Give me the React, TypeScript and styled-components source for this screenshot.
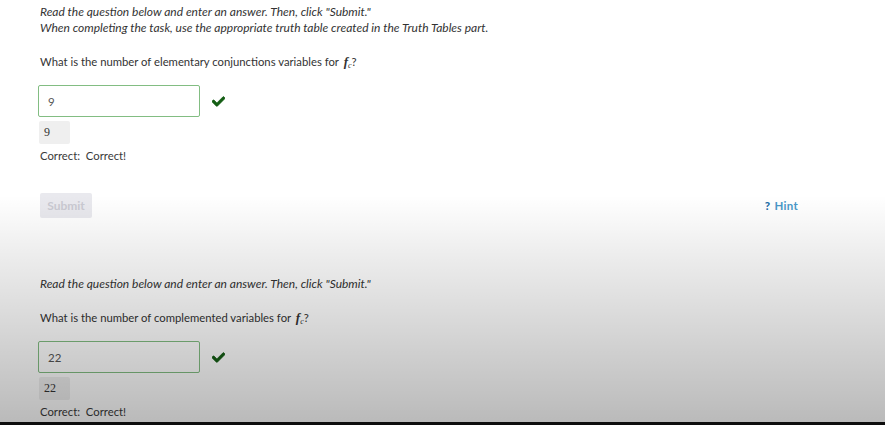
import React from 'react';
import styled, { createGlobalStyle } from 'styled-components';
import { FaCheck } from 'react-icons/fa';

const GlobalStyle = createGlobalStyle`
    body {
        margin: 0;
        background: #ffffff;
        font-family: 'Lato', 'Open Sans', sans-serif;
    }
`

const Page = styled.div`
    position: relative;
    width: 885px;
    height: 425px;
    box-sizing: border-box;
    padding: 4px 0 0 40px;
    overflow: hidden;
    background: #ffffff;
    border-bottom: 3px solid #0d0d0d;
    &::after {
        content: '';
        position: absolute;
        left: 0;
        right: 0;
        top: 195px;
        bottom: 0;
        pointer-events: none;
        background: linear-gradient(to bottom, rgba(0, 0, 0, 0) 0%, rgba(0, 0, 0, 0.27) 100%);
    }
`
const Block = styled.section<{ $gap?: number }>`
    display: flex;
    flex-direction: column;
    align-items: flex-start;
    margin-top: ${p => p.$gap ?? 0}px;
`
const Instruction = styled.p`
    margin: 0;
    font-size: 12px;
    line-height: 16px;
    font-style: italic;
    color: #333333;
`
const Question = styled.p`
    margin: 18px 0 0;
    height: 16px;
    font-size: 11.3px;
    line-height: 16px;
    color: #333333;
`
const MathVar = styled.span`
    font-family: 'Liberation Serif', serif;
    font-style: italic;
    font-weight: 700;
    font-size: 13px;
    line-height: 0;
    margin-left: 2px;
    sub {
        font-size: 8px;
        font-weight: 400;
        line-height: 0;
        vertical-align: -2px;
    }
`
const AnswerRow = styled.div`
    display: flex;
    align-items: center;
    margin-top: 15px;
`
const AnswerInput = styled.input`
    width: 162px;
    height: 32px;
    box-sizing: border-box;
    margin: 0 0 0 -2px;
    padding: 0 9px;
    font-family: 'Lato', 'Open Sans', sans-serif;
    font-size: 11.5px;
    color: #555555;
    background: transparent;
    border: 1.5px solid #82bd82;
    border-radius: 2px;
    outline: none;
`
const Check = styled(FaCheck)`
    margin-left: 12px;
    width: 13px;
    height: 13px;
    color: #155e15;
    stroke: #155e15;
    stroke-width: 30px;
`
const Preview = styled.div`
    margin-top: 4px;
    min-width: 31px;
    height: 23px;
    box-sizing: border-box;
    padding: 0 5px;
    margin-left: -1px;
    display: flex;
    align-items: center;
    background: #efefef;
    border-radius: 2px;
    font-family: 'Liberation Serif', serif;
    font-size: 12px;
    color: #333333;
`
const Feedback = styled.p`
    margin: 4px 0 0;
    font-size: 11.3px;
    line-height: 16px;
    color: #3a3a3a;
`
const ActionBar = styled.div`
    display: flex;
    justify-content: space-between;
    align-items: center;
    width: 758px;
    margin-top: 29px;
`
const SubmitButton = styled.button`
    width: 52px;
    height: 25px;
    padding: 0;
    font-family: 'Lato', 'Open Sans', sans-serif;
    font-size: 12px;
    font-weight: 700;
    color: #cacad2;
    background: #e9e9ee;
    border: none;
    border-radius: 2px;
`
const HintLink = styled.a`
    display: flex;
    align-items: center;
    gap: 4px;
    font-size: 11.5px;
    font-weight: 700;
    letter-spacing: 0.3px;
    color: #4a98c8;
    text-decoration: none;
    span {
        color: #1f6fa8;
        font-weight: 900;
    }
`

type QuestionProps = {
    lines: string[];
    text: string;
    answer: string;
    gap?: number;
};

const QuestionBlock = ({ lines, text, answer, gap }: QuestionProps) => (
    <Block $gap={gap}>
        {lines.map((l, i) => <Instruction key={i}>{l}</Instruction>)}
        <Question>
            {text} <MathVar>f<sub>c</sub></MathVar>?
        </Question>
        <AnswerRow>
            <AnswerInput type="text" defaultValue={answer} />
            <Check />
        </AnswerRow>
        <Preview>{answer}</Preview>
        <Feedback>Correct:&nbsp; Correct!</Feedback>
    </Block>
);

const App = () => {
    return (
        <Page>
            <GlobalStyle />
            <QuestionBlock
                lines={[
                    'Read the question below and enter an answer. Then, click "Submit."',
                    'When completing the task, use the appropriate truth table created in the Truth Tables part.',
                ]}
                text="What is the number of elementary conjunctions variables for"
                answer="9"
            />
            <ActionBar>
                <SubmitButton disabled>Submit</SubmitButton>
                <HintLink href="#"><span>?</span>Hint</HintLink>
            </ActionBar>
            <QuestionBlock
                gap={58}
                lines={['Read the question below and enter an answer. Then, click "Submit."']}
                text="What is the number of complemented variables for"
                answer="22"
            />
        </Page>
    );
}
export default App;
